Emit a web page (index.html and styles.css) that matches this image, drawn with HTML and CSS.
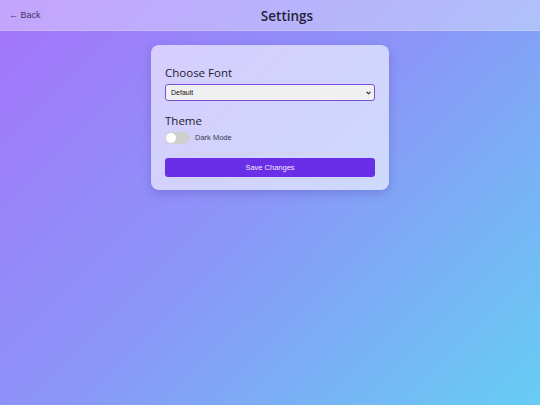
FILE: index.html
```html
<!DOCTYPE html>
<html>
<head>
<meta charset="utf-8">
<link rel="stylesheet" href="styles.css">
</head>
<body>
<header class="topbar">
  <a class="back">&larr; Back</a>
  <h1 class="title">Settings</h1>
</header>
<main class="main">
  <section class="card">
    <h2 class="label">Choose Font</h2>
    <div class="select-wrap">
      <select class="select">
        <option>Default</option>
      </select>
      <svg class="chev" width="5" height="4" viewBox="0 0 5 4"><path d="M0.6 0.8 L2.5 2.8 L4.4 0.8" fill="none" stroke="#222" stroke-width="1.1"/></svg>
    </div>
    <h2 class="label theme">Theme</h2>
    <div class="toggle-row">
      <span class="toggle"><span class="knob"></span></span>
      <span class="toggle-text">Dark Mode</span>
    </div>
    <button class="save">Save Changes</button>
  </section>
</main>
</body>
</html>
```
FILE: styles.css
```css
html, body {
  margin: 0;
  padding: 0;
  height: 100%;
}
body {
  font-family: "Liberation Sans", Arial, sans-serif;
  background: linear-gradient(135deg, #a574fc 0%, #8a97f7 50%, #66cdf4 100%);
  min-height: 405px;
}
.topbar {
  height: 31px;
  display: flex;
  align-items: center;
  padding: 0 4px 0 9px;
  background: rgba(255, 255, 255, 0.35);
  border-bottom: 1px solid rgba(255, 255, 255, 0.15);
  box-sizing: border-box;
}
.back {
  font-size: 9px;
  color: #3a3560;
  width: 29px;
  white-space: nowrap;
}
.title {
  flex: 1;
  margin: 0;
  text-align: center;
  font-family: "Open Sans", "Noto Sans", sans-serif;
  font-weight: 600;
  font-size: 13.5px;
  color: #24223a;
  margin-top: 2px;
}
.main {
  display: flex;
  justify-content: center;
  padding-top: 14px;
}
.card {
  width: 238px;
  box-sizing: border-box;
  padding: 20px 14px 13px;
  border-radius: 8px;
  background: rgba(255, 255, 255, 0.6);
  box-shadow: 0 3px 10px rgba(60, 40, 140, 0.25);
  display: flex;
  flex-direction: column;
}
.label {
  margin: 0 0 3px;
  font-family: "Open Sans", "Noto Sans", sans-serif;
  font-weight: 400;
  font-size: 11.5px;
  line-height: 16px;
  color: #1b1a2e;
}
.theme {
  margin-top: 12px;
  margin-bottom: 2px;
}
.select-wrap {
  position: relative;
  height: 17px;
}
.select {
  display: block;
  appearance: none;
  -webkit-appearance: none;
  height: 17px;
  width: 100%;
  box-sizing: border-box;
  font-family: "Liberation Sans", Arial, sans-serif;
  font-size: 7px;
  padding: 0 5px;
  border: 1px solid #7a4fd9;
  border-radius: 3px;
  background: #f0f0f0;
  color: #111;
  margin: 0;
}
.chev {
  position: absolute;
  right: 4px;
  top: 7px;
}
.toggle-row {
  display: flex;
  align-items: center;
  gap: 5px;
  height: 13px;
}
.toggle {
  width: 25px;
  height: 12px;
  border-radius: 6px;
  background: #cfcfcf;
  display: flex;
  align-items: center;
  padding: 0 1px;
  box-sizing: border-box;
}
.knob {
  width: 10px;
  height: 10px;
  border-radius: 50%;
  background: #ffffff;
}
.toggle-text {
  font-size: 7.5px;
  color: #3b3850;
}
.save {
  margin-top: 14px;
  height: 19px;
  border: none;
  border-radius: 3px;
  background: #6a2ee6;
  color: #f1eaff;
  font-family: "Liberation Sans", Arial, sans-serif;
  font-size: 7.5px;
}
```
